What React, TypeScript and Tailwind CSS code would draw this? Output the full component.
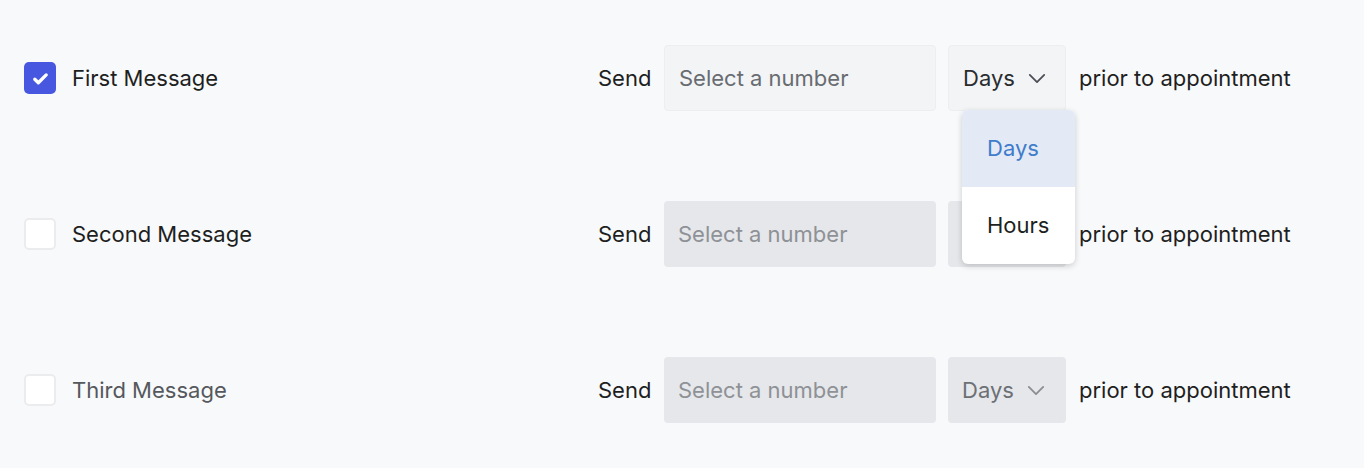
import React from "react";

function Chevron({ className }: { className: string }) {
  return (
    <svg viewBox="0 0 20 12" className={className} fill="none" stroke="currentColor" strokeWidth="2" strokeLinecap="round" strokeLinejoin="round">
      <path d="M2 2l8 8 8-8" />
    </svg>
  );
}

function Row({ label, checked, disabled, open }: { label: string; checked?: boolean; disabled?: boolean; open?: boolean }) {
  return (
    <div className="h-[156px] flex items-center pl-6">
      <div className="w-[574px] flex items-center gap-4">
        {checked ? (
          <div className="w-8 h-8 rounded-[5px] bg-[#4757e0] flex items-center justify-center">
            <svg viewBox="0 0 16 16" className="w-[19px] h-[19px]" fill="none" stroke="white" strokeWidth="2.8" strokeLinecap="round" strokeLinejoin="round">
              <path d="M3.2 8.6l3 3L12.8 5" />
            </svg>
          </div>
        ) : (
          <div className="w-8 h-8 rounded-[5px] bg-white border-2 border-[#ebecee]" />
        )}
        <span className={`text-[22px] ${disabled && label === "Third Message" ? "text-[#55585c]" : "text-[#1e1f21]"}`}>{label}</span>
      </div>
      <span className="w-[66px] text-[22px] text-[#1e1f21]">Send</span>
      <div
        className={`w-[272px] h-[66px] rounded-[4px] flex items-center px-[14px] text-[22px] ${
          disabled ? "bg-[#e5e7ea] text-[#8e9196]" : "bg-[#f3f4f6] border border-[#eceef1] text-[#686c71]"
        }`}
      >
        Select a number
      </div>
      <div className="relative ml-3">
        <div
          className={`w-[118px] h-[66px] rounded-[4px] flex items-center pl-[14px] gap-[13px] text-[22px] ${
            disabled ? "bg-[#e5e7ea] text-[#6c7075]" : "bg-[#f3f4f6] border border-[#eceef1] text-[#2a2c2f]"
          }`}
        >
          <span>Days</span>
          <Chevron className={`w-[18px] h-[11px] ${disabled ? "text-[#8a8e93]" : "text-[#4b4f55]"}`} />
        </div>
        {open && (
          <div className="absolute left-[14px] top-[65px] w-[113px] rounded-[6px] bg-white shadow-[0_2px_6px_rgba(0,0,0,0.18)] overflow-hidden z-10">
            <div className="h-[77px] flex items-center pl-[25px] bg-[#e3eaf6] text-[#3f7ccb] text-[22px]">Days</div>
            <div className="h-[77px] flex items-center pl-[25px] text-[#1e1f21] text-[22px]">Hours</div>
          </div>
        )}
      </div>
      <span className="ml-[13px] text-[22px] text-[#1e1f21]">prior to appointment</span>
    </div>
  );
}

export default function App() {
  return (
    <div className="w-[1364px] h-[468px] bg-[#f8f9fb] overflow-hidden" style={{ fontFamily: "Inter, 'Noto Sans', sans-serif" }}>
      <Row label="First Message" checked open />
      <Row label="Second Message" disabled />
      <Row label="Third Message" disabled />
    </div>
  );
}
